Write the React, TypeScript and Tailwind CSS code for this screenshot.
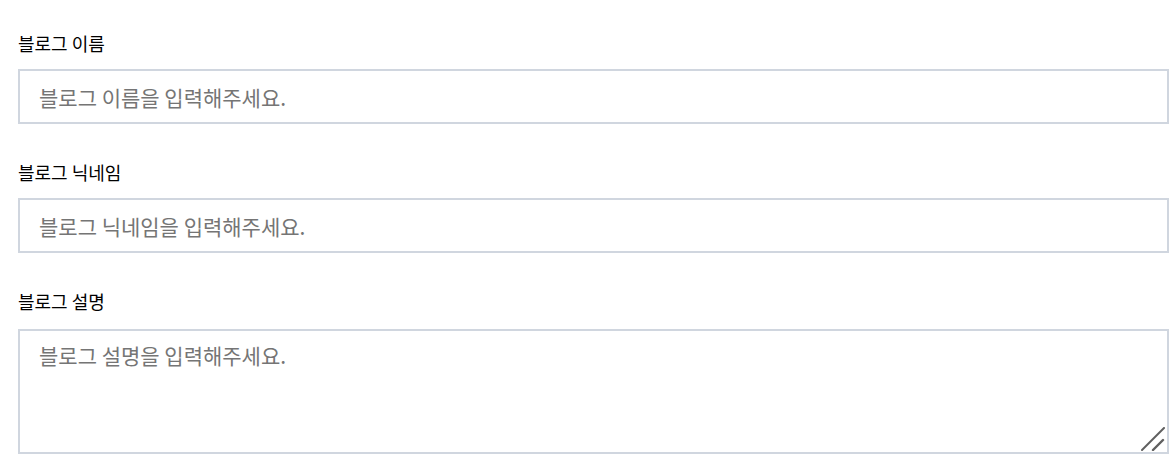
import React from "react";

const font = { fontFamily: '"Noto Sans CJK KR", "Noto Sans", sans-serif' };

export default function App() {
  return (
    <div className="w-[1173px] h-[472px] bg-white pt-[32px] pl-[18px]" style={font}>
      <div className="w-[1151px] flex flex-col">
        <label className="block text-[18px] leading-[22px] text-black">블로그 이름</label>
        <input
          className="mt-[15px] h-[55px] w-full border-2 border-[#d0d6df] px-[19px] text-[21px] text-[#222] placeholder:text-[#757575] outline-none"
          placeholder="블로그 이름을 입력해주세요."
        />
        <label className="block mt-[37px] text-[18px] leading-[22px] text-black">블로그 닉네임</label>
        <input
          className="mt-[15px] h-[55px] w-full border-2 border-[#d0d6df] px-[19px] text-[21px] text-[#222] placeholder:text-[#757575] outline-none"
          placeholder="블로그 닉네임을 입력해주세요."
        />
        <label className="block mt-[37px] text-[18px] leading-[22px] text-black">블로그 설명</label>
        <div className="relative mt-[17px]">
          <textarea
            className="block h-[125px] w-full resize-none border-2 border-[#d0d6df] px-[19px] pt-[10px] text-[21px] leading-[28px] text-[#222] placeholder:text-[#757575] outline-none"
            placeholder="블로그 설명을 입력해주세요."
          />
          <svg
            className="absolute right-[4px] bottom-[3px] pointer-events-none"
            width="24"
            height="24"
            viewBox="0 0 24 24"
          >
            <line x1="1" y1="23" x2="23" y2="1" stroke="#5f5f5f" strokeWidth="2" strokeLinecap="round" />
            <line x1="12" y1="23" x2="22" y2="13" stroke="#5f5f5f" strokeWidth="2.4" strokeLinecap="round" />
          </svg>
        </div>
      </div>
    </div>
  );
}
